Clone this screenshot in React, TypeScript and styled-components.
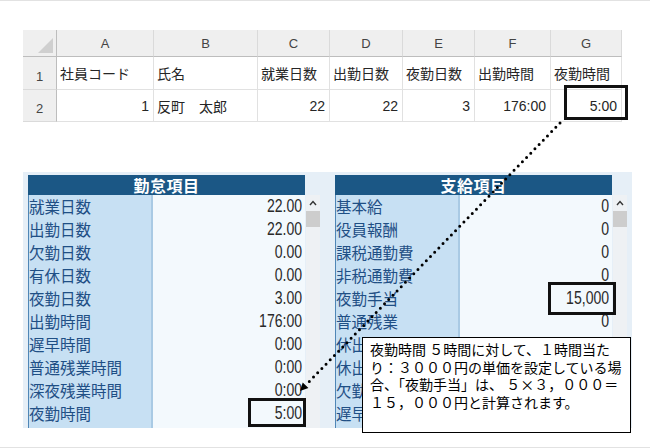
import React from "react";
import styled, { createGlobalStyle } from "styled-components";

const GlobalStyle = createGlobalStyle`
  html, body {
    margin: 0;
    padding: 0;
    background: #fff;
  }
  body {
    font-family: "Liberation Sans", "Noto Sans CJK JP", sans-serif;
  }
`;

const Page = styled.div`
  position: relative;
  width: 650px;
  height: 448px;
  box-sizing: border-box;
  padding: 30px 0 0 23px;
  overflow: hidden;
  box-shadow: inset 0 1px 0 #e2e2e2, inset 0 -1px 0 #e2e2e2;
`;

/* ---------- spreadsheet ---------- */

const Sheet = styled.div`
  display: grid;
  grid-template-columns: 34px 97px 104px 72px 73px 72px 76px 71px;
  grid-template-rows: 27px 33px 32px;
  width: 599px;
`;

const Corner = styled.div`
  position: relative;
  background: #efefef;
  border-right: 1px solid #bdbdbd;
  border-bottom: 1px solid #bdbdbd;
  box-sizing: border-box;

  &::after {
    content: "";
    position: absolute;
    right: 3px;
    bottom: 3px;
    width: 0;
    height: 0;
    border-left: 15px solid transparent;
    border-bottom: 15px solid #cfcfcf;
  }
`;

const ColHead = styled.div`
  display: flex;
  align-items: center;
  justify-content: center;
  background: #efefef;
  border-right: 1px solid #dadada;
  border-bottom: 1px solid #bdbdbd;
  box-sizing: border-box;
  font-size: 13px;
  color: #444;
`;

const RowHead = styled.div`
  display: flex;
  align-items: flex-end;
  justify-content: center;
  padding-bottom: 5px;
  background: #efefef;
  border-right: 1px solid #bdbdbd;
  border-bottom: 1px solid #dadada;
  box-sizing: border-box;
  font-size: 13px;
  color: #444;
`;

const Cell = styled.div<{ $num?: boolean }>`
  display: flex;
  align-items: center;
  justify-content: ${(p) => (p.$num ? "flex-end" : "flex-start")};
  padding: 0 4px 0 3px;
  background: #fff;
  border-right: 1px solid #e1e1e1;
  border-bottom: 1px solid #e1e1e1;
  box-sizing: border-box;
  font-size: 14px;
  color: #262626;
  white-space: nowrap;
  overflow: hidden;
`;

/* ---------- payroll panel ---------- */

const Panel = styled.div`
  display: flex;
  gap: 14px;
  margin-top: 50px;
  width: 609px;
  height: 256px;
  box-sizing: border-box;
  padding: 3px 0 0 5px;
  background: #e6eff7;
  overflow: hidden;
`;

const Block = styled.div`
  display: flex;
  flex-direction: column;
  width: 293px;
`;

const Title = styled.div`
  width: 277px;
  height: 20px;
  line-height: 20px;
  background: #1b5785;
  color: #fff;
  text-align: center;
  font-family: "Noto Sans CJK JP", sans-serif;
  font-weight: 700;
  font-size: 16px;
  letter-spacing: 0.5px;
`;

const Body = styled.div`
  display: flex;
  align-items: flex-start;
  gap: 1px;
`;

const Rows = styled.div`
  width: 277px;
  box-sizing: border-box;
  border-left: 1px solid #4f86b6;
`;

const Row = styled.div`
  display: grid;
  grid-template-columns: 124px 1fr;
  height: 23px;
  box-sizing: border-box;
  border-bottom: 1px solid #e6f0f8;
`;

const Label = styled.div`
  background: #c7e0f3;
  border-right: 2px solid #a9cae4;
  color: #1f4f85;
  font-family: "Noto Sans CJK JP", sans-serif;
  font-size: 15.5px;
  line-height: 22px;
  white-space: nowrap;
  overflow: hidden;
`;

const Value = styled.div`
  background: #f3f9fd;
  color: #2a2a2a;
  text-align: right;
  padding-right: 3px;
  font-family: "Liberation Sans", sans-serif;
  font-size: 18px;
  line-height: 23px;
  white-space: nowrap;
`;

const Narrow = styled.span`
  display: inline-block;
  transform: scaleX(0.78);
  transform-origin: right center;
`;

const Scrollbar = styled.div`
  display: flex;
  flex-direction: column;
  align-items: center;
  width: 14px;
  height: 240px;
  background: #eef1f4;
`;

const ArrowUp = styled.div`
  display: flex;
  align-items: center;
  justify-content: center;
  height: 16px;
`;

const Thumb = styled.div`
  width: 14px;
  height: 16px;
  background: #cdcdcd;
`;

/* ---------- annotations ---------- */

const Mark = styled.div<{ $x: number; $y: number; $w: number; $h: number }>`
  position: absolute;
  left: ${(p) => p.$x}px;
  top: ${(p) => p.$y}px;
  width: ${(p) => p.$w}px;
  height: ${(p) => p.$h}px;
  box-sizing: border-box;
  border: 3px solid #111;
`;

const Leader = styled.svg`
  position: absolute;
  left: 0;
  top: 0;
  pointer-events: none;
`;

const Callout = styled.div`
  position: absolute;
  left: 362px;
  top: 337px;
  width: 269px;
  height: 96px;
  box-sizing: border-box;
  padding: 3px 0 0 7px;
  background: #fff;
  border: 1px solid #000;
  color: #000;
  font-family: "Noto Sans CJK JP", sans-serif;
  font-size: 14px;
  line-height: 17.7px;
`;

const Line = styled.div`
  white-space: nowrap;
`;

const columns = ["A", "B", "C", "D", "E", "F", "G"];
const heads = ["社員コード", "氏名", "就業日数", "出勤日数", "夜勤日数", "出勤時間", "夜勤時間"];
const record = [
  { v: "1", num: true },
  { v: "反町　太郎", num: false },
  { v: "22", num: true },
  { v: "22", num: true },
  { v: "3", num: true },
  { v: "176:00", num: true },
  { v: "5:00", num: true },
];

const attendance: [string, string][] = [
  ["就業日数", "22.00"],
  ["出勤日数", "22.00"],
  ["欠勤日数", "0.00"],
  ["有休日数", "0.00"],
  ["夜勤日数", "3.00"],
  ["出勤時間", "176:00"],
  ["遅早時間", "0:00"],
  ["普通残業時間", "0:00"],
  ["深夜残業時間", "0:00"],
  ["夜勤時間", "5:00"],
  ["", ""],
];

// values of the lower rows sit under the callout, so they are left blank
const payments: [string, string][] = [
  ["基本給", "0"],
  ["役員報酬", "0"],
  ["課税通勤費", "0"],
  ["非税通勤費", "0"],
  ["夜勤手当", "15,000"],
  ["普通残業", "0"],
  ["休出残業", ""],
  ["休出深夜", ""],
  ["欠勤控除", ""],
  ["遅早控除", ""],
  ["", ""],
];

function Table({ title, items }: { title: string; items: [string, string][] }) {
  return (
    <Block>
      <Title>{title}</Title>
      <Body>
        <Rows>
          {items.map(([label, value], i) => (
            <Row key={i}>
              <Label>{label}</Label>
              <Value>
                <Narrow>{value}</Narrow>
              </Value>
            </Row>
          ))}
        </Rows>
        <Scrollbar>
          <ArrowUp>
            <svg width="8" height="6" viewBox="0 0 8 6">
              <path d="M1 5 L4 1.5 L7 5" fill="none" stroke="#333" strokeWidth="1.4" />
            </svg>
          </ArrowUp>
          <Thumb />
        </Scrollbar>
      </Body>
    </Block>
  );
}

export default function App() {
  // leader line from the G2 mark down to the 夜勤時間 value
  const from = { x: 560, y: 123 };
  const tip = { x: 300, y: 391 };
  const dx = tip.x - from.x;
  const dy = tip.y - from.y;
  const len = Math.hypot(dx, dy);
  const ux = dx / len;
  const uy = dy / len;
  const base = { x: tip.x - ux * 8, y: tip.y - uy * 8 };
  const head = `${tip.x},${tip.y} ${base.x + uy * 4},${base.y - ux * 4} ${base.x - uy * 4},${base.y + ux * 4}`;

  return (
    <>
      <GlobalStyle />
      <Page>
        <Sheet>
          <Corner />
          {columns.map((c) => (
            <ColHead key={c}>{c}</ColHead>
          ))}
          <RowHead>1</RowHead>
          {heads.map((h) => (
            <Cell key={h}>{h}</Cell>
          ))}
          <RowHead>2</RowHead>
          {record.map((r, i) => (
            <Cell key={i} $num={r.num}>
              {r.v}
            </Cell>
          ))}
        </Sheet>

        <Panel>
          <Table title="勤怠項目" items={attendance} />
          <Table title="支給項目" items={payments} />
        </Panel>

        <Mark $x={564} $y={85} $w={64} $h={35} />
        <Mark $x={548} $y={282} $w={68} $h={33} />
        <Mark $x={248} $y={398} $w={58} $h={29} />

        <Leader width={650} height={448} viewBox="0 0 650 448">
          <line
            x1={from.x}
            y1={from.y}
            x2={base.x}
            y2={base.y}
            stroke="#000"
            strokeWidth={3}
            strokeLinecap="round"
            strokeDasharray="0 6"
          />
          <polygon points={head} fill="#000" />
        </Leader>

        <Callout>
          <Line>夜勤時間 ５時間に対して、１時間当た</Line>
          <Line>り：３０００円の単価を設定している場</Line>
          <Line>合、「夜勤手当」は、 ５×３，０００＝</Line>
          <Line>１５，０００円と計算されます。</Line>
        </Callout>
      </Page>
    </>
  );
}
